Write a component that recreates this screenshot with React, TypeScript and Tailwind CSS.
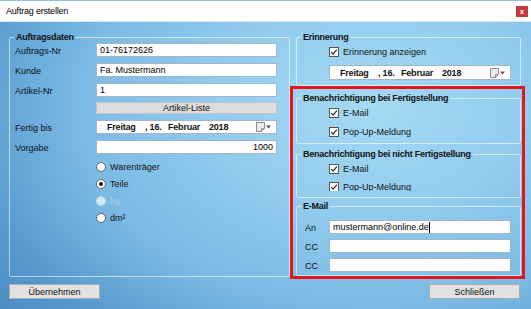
import React from "react";

function Field({ children, className = "" }: { children?: React.ReactNode; className?: string }) {
  return (
    <div
      className={
        "h-[14px] bg-white border border-[#a3b5c6] text-[9px] leading-[12px] px-[3px] flex items-center text-black whitespace-nowrap overflow-hidden " +
        className
      }
    >
      {children}
    </div>
  );
}

function CalIcon() {
  return (
    <div className="ml-auto mr-[5px] flex items-center gap-[1px]">
      <svg width="9" height="10" viewBox="0 0 9 10">
        <path d="M0.5 0.5 H8.5 V6.5 L5.5 9.5 H0.5 Z" fill="#ececec" stroke="#8a8a8a" strokeWidth="1" />
        <path d="M5.5 9.5 V6.5 H8.5" fill="none" stroke="#8a8a8a" strokeWidth="1" />
      </svg>
      <svg width="5" height="4" viewBox="0 0 5 4">
        <path d="M0 0.5 H5 L2.5 3.5 Z" fill="#555" />
      </svg>
    </div>
  );
}

function DateField({ className = "" }: { className?: string }) {
  return (
    <div
      className={
        "bg-white border border-[#a3b5c6] text-[9px] leading-[12px] font-bold tracking-[-0.2px] flex items-center text-[#111] whitespace-nowrap " +
        className
      }
    >
      <span className="ml-[10px] w-[38px]">Freitag</span>
      <span className="w-[23px]">, 16.</span>
      <span className="w-[41px]">Februar</span>
      <span>2018</span>
      <CalIcon />
    </div>
  );
}

function Check({ label, className = "" }: { label: string; className?: string }) {
  return (
    <div className={"flex items-center h-[14px] " + className}>
      <span className="w-[10px] h-[10px] bg-white border border-[#555] flex items-center justify-center shrink-0">
        <svg width="8" height="8" viewBox="0 0 8 8">
          <path d="M1.2 4.2 L3.1 6.1 L6.9 1.6" fill="none" stroke="#2a2a2a" strokeWidth="1.2" />
        </svg>
      </span>
      <span className="ml-[4px] text-[9px] leading-[12px] text-[#111]">{label}</span>
    </div>
  );
}

function Radio({ label, checked = false, disabled = false }: { label: string; checked?: boolean; disabled?: boolean }) {
  return (
    <div className="h-[17px] flex items-center">
      <span
        className={
          "w-[10px] h-[10px] rounded-full border flex items-center justify-center shrink-0 " +
          (disabled ? "bg-white/70 border-[#bcd8ea]" : "bg-white border-[#666]")
        }
      >
        {checked && <span className="w-[4px] h-[4px] rounded-full bg-[#111]" />}
      </span>
      <span className={"ml-[4px] text-[9px] leading-[12px] " + (disabled ? "text-[#a9c8dd]" : "text-[#111]")}>
        {label}
      </span>
    </div>
  );
}

function Legend({ children }: { children: React.ReactNode }) {
  return (
    <legend className="ml-[4px] px-[2px] text-[9px] leading-[12px] font-bold tracking-[-0.25px] text-[#111]">
      {children}
    </legend>
  );
}

function Row({ label, children }: { label: string; children: React.ReactNode }) {
  return (
    <div className="flex items-center">
      <span className="w-[81px] text-[9px] leading-[12px] pt-[2px] text-[#111]">{label}</span>
      {children}
    </div>
  );
}

export default function App() {
  return (
    <div className="w-[531px] h-[309px] flex flex-col overflow-hidden font-['Liberation_Sans',Arial,sans-serif] text-[#111]">
      <div className="h-[22px] bg-white border-t border-t-[#8cc2e5] border-b border-b-[#d9e6ef] flex items-center justify-between pl-[6px] pr-[3px] shrink-0">
        <span className="text-[9px] leading-[12px] tracking-[-0.2px] text-black">Auftrag erstellen</span>
        <div className="w-[12px] h-[11px] bg-[#c8383f] flex items-center justify-center text-white text-[7px] leading-[7px] font-bold">
          x
        </div>
      </div>
      <div className="flex-1 flex flex-col pl-[9px] pr-[6px] pt-[9px] pb-[10px] bg-[radial-gradient(ellipse_95%_120%_at_70%_30%,#a6d9f3_0%,#92ccee_30%,#7bbae4_58%,#5598ce_82%,#4687c0_100%)]">
        <div className="flex h-[248px]">
          <fieldset className="w-[281px] h-[246px] border border-white/60 rounded-[2px]">
            <Legend>Auftragsdaten</Legend>
            <div className="pl-[5px]">
              <Row label="Auftrags-Nr">
                <Field className="w-[181px]">01-76172626</Field>
              </Row>
              <div className="mt-[6px]">
                <Row label="Kunde">
                  <Field className="w-[181px]">Fa. Mustermann</Field>
                </Row>
              </div>
              <div className="mt-[6px]">
                <Row label="Artikel-Nr">
                  <Field className="w-[181px]">1</Field>
                </Row>
              </div>
              <div className="mt-[5px] ml-[81px] w-[181px] h-[12px] bg-[#dcdcdc] border border-[#c4c4c4] flex items-center justify-center text-[9px] leading-[10px] text-[#111]">
                Artikel-Liste
              </div>
              <div className="mt-[6px]">
                <Row label="Fertig bis">
                  <DateField className="w-[181px] h-[14px]" />
                </Row>
              </div>
              <div className="mt-[6px]">
                <Row label="Vorgabe">
                  <Field className="w-[181px] justify-end">1000</Field>
                </Row>
              </div>
              <div className="mt-[4px] ml-[81px] flex flex-col">
                <Radio label="Warenträger" />
                <Radio label="Teile" checked />
                <Radio label="kg" disabled />
                <Radio label="dm²" />
              </div>
            </div>
          </fieldset>
          <div className="w-[235px] flex flex-col">
            <fieldset className="ml-[6px] mr-[4px] h-[55px] border border-white/60 rounded-[2px]">
              <Legend>Erinnerung</Legend>
              <div className="pl-[32px]">
                <Check label="Erinnerung anzeigen" className="mt-[2px]" />
                <DateField className="mt-[6px] w-[182px] h-[15px]" />
              </div>
            </fieldset>
            <div className="h-[193px] border-[3px] border-[#e3161d] pt-[3px] pl-[3px] pr-[1px] flex flex-col">
              <fieldset className="h-[52px] border border-white/60 rounded-[2px]">
                <Legend>Benachrichtigung bei Fertigstellung</Legend>
                <div className="pl-[32px]">
                  <Check label="E-Mail" className="mt-[2px]" />
                  <Check label="Pop-Up-Meldung" className="mt-[5px]" />
                </div>
              </fieldset>
              <fieldset className="mt-[4px] h-[50px] border border-white/60 rounded-[2px]">
                <Legend>Benachrichtigung bei nicht Fertigstellung</Legend>
                <div className="pl-[32px] h-[31px] overflow-hidden">
                  <Check label="E-Mail" className="mt-[2px]" />
                  <Check label="Pop-Up-Meldung" className="mt-[4px]" />
                </div>
              </fieldset>
              <fieldset className="mt-[2px] h-[76px] border border-white/60 rounded-[2px]">
                <Legend>E-Mail</Legend>
                <div className="pl-[8px]">
                  <div className="mt-[8px] flex items-center">
                    <span className="w-[24px] text-[9px] leading-[12px] pt-[2px]">An</span>
                    <Field className="w-[182px]">
                      mustermann@online.de<span className="inline-block w-[1px] h-[11px] bg-black" />
                    </Field>
                  </div>
                  <div className="mt-[5px] flex items-center">
                    <span className="w-[24px] text-[9px] leading-[12px] pt-[2px]">CC</span>
                    <Field className="w-[182px]" />
                  </div>
                  <div className="mt-[5px] flex items-center">
                    <span className="w-[24px] text-[9px] leading-[12px] pt-[2px]">CC</span>
                    <Field className="w-[182px]" />
                  </div>
                </div>
              </fieldset>
            </div>
          </div>
        </div>
        <div className="mt-[5px] flex justify-between pr-[5px]">
          <div className="w-[91px] h-[15px] bg-[#e1e1e1] border border-[#adadad] flex items-center justify-center text-[9px] leading-[12px] text-[#111]">
            Übernehmen
          </div>
          <div className="w-[91px] h-[15px] bg-[#e1e1e1] border border-[#adadad] flex items-center justify-center text-[9px] leading-[12px] text-[#111]">
            Schließen
          </div>
        </div>
      </div>
    </div>
  );
}
